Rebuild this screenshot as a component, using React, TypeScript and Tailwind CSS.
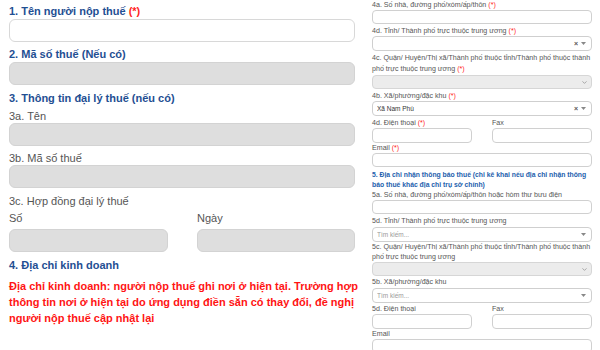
import { ChevronDown } from 'lucide-react'

const Req = () => <span className="text-[#ff1f1f]">(*)</span>

function Heading({ children, className = '' }: { children: React.ReactNode; className?: string }) {
  return <div className={`text-[11px] font-bold leading-[13px] text-[#1f4f93] ${className}`}>{children}</div>
}

function Label({ children, className = '' }: { children: React.ReactNode; className?: string }) {
  return <div className={`text-[11px] leading-[13px] text-[#555] ${className}`}>{children}</div>
}

function Box({ gray = false, className = '' }: { gray?: boolean; className?: string }) {
  return (
    <div
      className={`h-[23px] rounded-[6px] border ${
        gray ? 'border-[#d3d3d3] bg-[#dedede]' : 'border-[#d8d8d8] bg-white'
      } ${className}`}
    />
  )
}

function SmLabel({ children, className = '' }: { children: React.ReactNode; className?: string }) {
  return <div className={`text-[7.1px] leading-[10px] text-[#555] ${className}`}>{children}</div>
}

function SmInput({ className = '' }: { className?: string }) {
  return <div className={`h-[14px] rounded-[4px] border border-[#d0d0d0] bg-white ${className}`} />
}

function Caret() {
  return (
    <svg width="5" height="3" viewBox="0 0 5 3" className="shrink-0">
      <path d="M0 0h5L2.5 3z" fill="#888" />
    </svg>
  )
}

function SmSelect({
  value,
  placeholder,
  clear = false,
  className = '',
}: {
  value?: string
  placeholder?: string
  clear?: boolean
  className?: string
}) {
  return (
    <div
      className={`flex h-[15px] items-center rounded-[4px] border border-[#cfcfcf] bg-white pl-[4px] pr-[5px] text-[6.5px] ${className}`}
    >
      <span className={`flex-1 truncate ${value ? 'text-[#333]' : 'text-[#9a9a9a]'}`}>{value ?? placeholder}</span>
      {clear && <span className="mr-[3px] text-[7px] font-bold leading-none text-[#555]">×</span>}
      <Caret />
    </div>
  )
}

function GraySelect({ className = '' }: { className?: string }) {
  return (
    <div
      className={`flex h-[14px] items-center justify-end rounded-[4px] border border-[#d6d6d6] bg-[#ececec] pr-[3px] ${className}`}
    >
      <ChevronDown size={7} strokeWidth={2} className="text-[#777]" />
    </div>
  )
}

export default function App() {
  return (
    <div className="flex h-[350px] w-[600px] overflow-hidden bg-white font-['Liberation_Sans',Arial,sans-serif]">
      {/* left: tax payer form */}
      <div className="w-[365px] shrink-0 pl-[9px] pt-[5px]">
        <div className="w-[346px]">
          <Heading>
            1. Tên người nộp thuế <span className="text-[#ff1f1f]">(*)</span>
          </Heading>
          <Box className="mt-[1px]" />
          <Heading className="mt-[6px]">2. Mã số thuế (Nếu có)</Heading>
          <Box gray className="mt-[1px]" />
          <Heading className="mt-[7px]">3. Thông tin đại lý thuế (nếu có)</Heading>
          <Label className="mt-[5px]">3a. Tên</Label>
          <Box gray />
          <Label className="mt-[6px]">3b. Mã số thuế</Label>
          <Box gray />
          <Label className="mt-[7px]">3c. Hợp đồng đại lý thuế</Label>
          <div className="mt-[4px] grid grid-cols-[159px_158px] gap-x-[29px]">
            <Label>Số</Label>
            <Label>Ngày</Label>
            <Box gray className="mt-[4px]" />
            <Box gray className="mt-[4px]" />
          </div>
          <Heading className="mt-[7px]">4. Địa chỉ kinh doanh</Heading>
        </div>
        <p className="mt-[6px] w-[360px] text-[11px] font-bold leading-[16px] text-[#ff1414]">
          Địa chỉ kinh doanh: người nộp thuế ghi nơi ở hiện tại. Trường hợp thông tin nơi ở hiện tại do ứng dụng
          điền sẵn có thay đổi, đề nghị người nộp thuế cập nhật lại
        </p>
      </div>

      {/* right: address form */}
      <div className="w-[235px] shrink-0 pl-[7px] pr-[8px]">
        <SmLabel>
          4a. Số nhà, đường phố/xóm/ấp/thôn <Req />
        </SmLabel>
        <SmInput />
        <SmLabel className="mt-[2px]">
          4d. Tỉnh/ Thành phố trực thuộc trung ương <Req />
        </SmLabel>
        <SmSelect placeholder="" clear />
        <SmLabel className="mt-[2px] leading-[11px]">
          4c. Quận/ Huyện/Thị xã/Thành phố thuộc tỉnh/Thành phố thuộc thành phố trực thuộc trung ương <Req />
        </SmLabel>
        <GraySelect />
        <SmLabel className="mt-[2px]">
          4b. Xã/phường/đặc khu <Req />
        </SmLabel>
        <SmSelect value="Xã Nam Phù" clear />
        <div className="mt-[2px] grid grid-cols-2 gap-x-[20px]">
          <SmLabel>
            4d. Điện thoại <Req />
          </SmLabel>
          <SmLabel>Fax</SmLabel>
          <SmInput className="h-[15px]" />
          <SmInput className="h-[15px]" />
        </div>
        <SmLabel>
          Email <Req />
        </SmLabel>
        <SmInput />
        <div className="-mr-[2px] mt-[3px] text-[6.8px] font-bold leading-[10px] text-[#2360ad]">
          5. Địa chỉ nhận thông báo thuế (chỉ kê khai nếu địa chỉ nhận thông báo thuế khác địa chỉ trụ sở chính)
        </div>
        <SmLabel>5a. Số nhà, đường phố/xóm/ấp/thôn hoặc hòm thư bưu điện</SmLabel>
        <SmInput />
        <SmLabel className="mt-[2px]">5d. Tỉnh/ Thành phố trực thuộc trung ương</SmLabel>
        <SmSelect placeholder="Tìm kiếm..." className="mt-[1px] h-[14px]" />
        <SmLabel>5c. Quận/ Huyện/Thị xã/Thành phố thuộc tỉnh/Thành phố thuộc thành phố trực thuộc trung ương</SmLabel>
        <GraySelect />
        <SmLabel className="mt-[1px]">5b. Xã/phường/đặc khu</SmLabel>
        <SmSelect placeholder="Tìm kiếm..." className="mt-[1px] h-[14px]" />
        <div className="mt-[1px] grid grid-cols-2 gap-x-[20px]">
          <SmLabel>5d. Điện thoại</SmLabel>
          <SmLabel>Fax</SmLabel>
          <SmInput className="h-[15px]" />
          <SmInput className="h-[15px]" />
        </div>
        <SmLabel>Email</SmLabel>
        <SmInput />
      </div>
    </div>
  )
}
